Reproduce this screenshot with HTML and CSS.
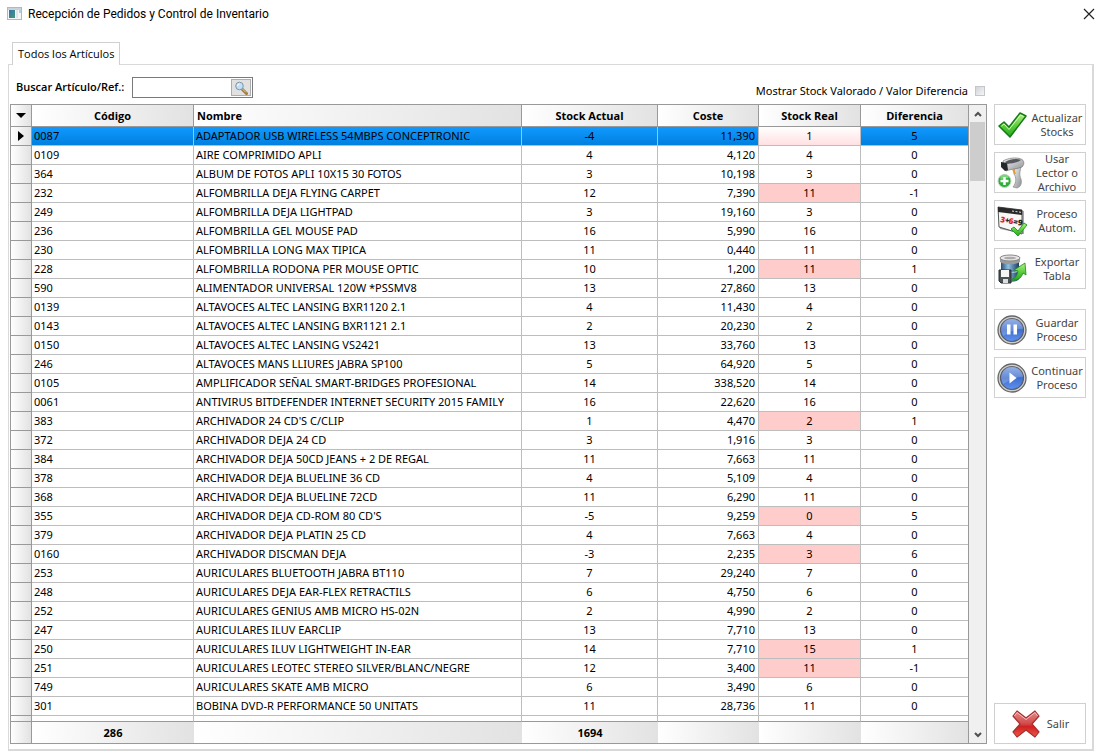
FILE: index.html
```html
<!DOCTYPE html>
<html lang="es">
<head>
<meta charset="utf-8">
<title>Recepción de Pedidos y Control de Inventario</title>
<link rel="stylesheet" href="styles.css">
</head>
<body>
<header class="titlebar">
  <svg class="app-icon" width="15" height="14" viewBox="0 0 15 14"><defs><linearGradient id="app" x1="0" y1="0" x2="1" y2="1"><stop offset="0" stop-color="#3b6fae"/><stop offset="1" stop-color="#3f9a78"/></linearGradient></defs><rect x=".5" y=".5" width="14" height="12" fill="#f4f6f8" stroke="#b4b8bd"/><rect x="1" y="1" width="13" height="2" fill="#c9d1da"/><rect x="2" y="3" width="6" height="8" fill="url(#app)"/><rect x="9" y="3" width="2" height="8" fill="#dfe6ea"/><rect x="12" y="3" width="2" height="3" fill="#b9ccd8"/></svg>
  <h1 class="title">Recepción de Pedidos y Control de Inventario</h1>
  <button class="close" type="button" aria-label="Cerrar"><svg width="12" height="12" viewBox="0 0 12 12"><path d="M1 1l10 10M11 1L1 11" stroke="#222" stroke-width="1.2"/></svg></button>
</header>
<nav class="tabs"><button class="tab" type="button">Todos los Artículos</button></nav>
<main class="panel">
  <div class="toolbar">
    <label class="search-label" for="search">Buscar Artículo/Ref.:</label>
    <div class="search">
      <input class="search-input" id="search" type="text">
      <button class="search-button" type="button" aria-label="Buscar"><svg width="14" height="14" viewBox="0 0 14 14"><path d="M8 8l4.500 4.500" stroke="#a07a3c" stroke-width="3" stroke-linecap="round"/><path d="M8 7.500l4 4" stroke="#e6cf94" stroke-width="1"/><circle cx="5.500" cy="5" r="3.800" fill="#bfe0f6" stroke="#7f95a8"/><path d="M3.500 5a2 2 0 0 1 2-2" stroke="#fff" fill="none"/></svg></button>
    </div>
    <label class="valued" for="valued">Mostrar Stock Valorado / Valor Diferencia</label>
    <input class="check" id="valued" type="checkbox">
  </div>
  <div class="content">
    <div class="grid">
      <table class="table">
        <colgroup><col class="c-mark"><col class="c-code"><col class="c-name"><col class="c-stock"><col class="c-cost"><col class="c-real"><col class="c-diff"></colgroup>
        <thead><tr><th class="mark"><svg width="10" height="5" viewBox="0 0 10 5"><path d="M0 0h10L5 5z"/></svg></th><th>Código</th><th class="left">Nombre</th><th>Stock Actual</th><th>Coste</th><th>Stock Real</th><th>Diferencia</th></tr></thead>
        <tbody>
          <tr class="selected"><td class="mark"><svg width="6" height="10" viewBox="0 0 6 10"><path d="M0 0v10l6-5z"/></svg></td><td>0087</td><td>ADAPTADOR USB WIRELESS 54MBPS CONCEPTRONIC</td><td>-4</td><td>11,390</td><td class="changed">1</td><td>5</td></tr>
          <tr><td class="mark"></td><td>0109</td><td>AIRE COMPRIMIDO APLI</td><td>4</td><td>4,120</td><td>4</td><td>0</td></tr>
          <tr><td class="mark"></td><td>364</td><td>ALBUM DE FOTOS APLI 10X15 30 FOTOS</td><td>3</td><td>10,198</td><td>3</td><td>0</td></tr>
          <tr><td class="mark"></td><td>232</td><td>ALFOMBRILLA DEJA FLYING CARPET</td><td>12</td><td>7,390</td><td class="changed">11</td><td>-1</td></tr>
          <tr><td class="mark"></td><td>249</td><td>ALFOMBRILLA DEJA LIGHTPAD</td><td>3</td><td>19,160</td><td>3</td><td>0</td></tr>
          <tr><td class="mark"></td><td>236</td><td>ALFOMBRILLA GEL MOUSE PAD</td><td>16</td><td>5,990</td><td>16</td><td>0</td></tr>
          <tr><td class="mark"></td><td>230</td><td>ALFOMBRILLA LONG MAX TIPICA</td><td>11</td><td>0,440</td><td>11</td><td>0</td></tr>
          <tr><td class="mark"></td><td>228</td><td>ALFOMBRILLA RODONA PER MOUSE OPTIC</td><td>10</td><td>1,200</td><td class="changed">11</td><td>1</td></tr>
          <tr><td class="mark"></td><td>590</td><td>ALIMENTADOR UNIVERSAL 120W *PSSMV8</td><td>13</td><td>27,860</td><td>13</td><td>0</td></tr>
          <tr><td class="mark"></td><td>0139</td><td>ALTAVOCES ALTEC LANSING BXR1120 2.1</td><td>4</td><td>11,430</td><td>4</td><td>0</td></tr>
          <tr><td class="mark"></td><td>0143</td><td>ALTAVOCES ALTEC LANSING BXR1121 2.1</td><td>2</td><td>20,230</td><td>2</td><td>0</td></tr>
          <tr><td class="mark"></td><td>0150</td><td>ALTAVOCES ALTEC LANSING VS2421</td><td>13</td><td>33,760</td><td>13</td><td>0</td></tr>
          <tr><td class="mark"></td><td>246</td><td>ALTAVOCES MANS LLIURES JABRA SP100</td><td>5</td><td>64,920</td><td>5</td><td>0</td></tr>
          <tr><td class="mark"></td><td>0105</td><td>AMPLIFICADOR SEÑAL SMART-BRIDGES PROFESIONAL</td><td>14</td><td>338,520</td><td>14</td><td>0</td></tr>
          <tr><td class="mark"></td><td>0061</td><td>ANTIVIRUS BITDEFENDER INTERNET SECURITY 2015 FAMILY</td><td>16</td><td>22,620</td><td>16</td><td>0</td></tr>
          <tr><td class="mark"></td><td>383</td><td>ARCHIVADOR 24 CD'S C/CLIP</td><td>1</td><td>4,470</td><td class="changed">2</td><td>1</td></tr>
          <tr><td class="mark"></td><td>372</td><td>ARCHIVADOR DEJA 24 CD</td><td>3</td><td>1,916</td><td>3</td><td>0</td></tr>
          <tr><td class="mark"></td><td>384</td><td>ARCHIVADOR DEJA 50CD JEANS + 2 DE REGAL</td><td>11</td><td>7,663</td><td>11</td><td>0</td></tr>
          <tr><td class="mark"></td><td>378</td><td>ARCHIVADOR DEJA BLUELINE 36 CD</td><td>4</td><td>5,109</td><td>4</td><td>0</td></tr>
          <tr><td class="mark"></td><td>368</td><td>ARCHIVADOR DEJA BLUELINE 72CD</td><td>11</td><td>6,290</td><td>11</td><td>0</td></tr>
          <tr><td class="mark"></td><td>355</td><td>ARCHIVADOR DEJA CD-ROM 80 CD'S</td><td>-5</td><td>9,259</td><td class="changed">0</td><td>5</td></tr>
          <tr><td class="mark"></td><td>379</td><td>ARCHIVADOR DEJA PLATIN 25 CD</td><td>4</td><td>7,663</td><td>4</td><td>0</td></tr>
          <tr><td class="mark"></td><td>0160</td><td>ARCHIVADOR DISCMAN DEJA</td><td>-3</td><td>2,235</td><td class="changed">3</td><td>6</td></tr>
          <tr><td class="mark"></td><td>253</td><td>AURICULARES BLUETOOTH JABRA BT110</td><td>7</td><td>29,240</td><td>7</td><td>0</td></tr>
          <tr><td class="mark"></td><td>248</td><td>AURICULARES DEJA EAR-FLEX RETRACTILS</td><td>6</td><td>4,750</td><td>6</td><td>0</td></tr>
          <tr><td class="mark"></td><td>252</td><td>AURICULARES GENIUS AMB MICRO HS-02N</td><td>2</td><td>4,990</td><td>2</td><td>0</td></tr>
          <tr><td class="mark"></td><td>247</td><td>AURICULARES ILUV EARCLIP</td><td>13</td><td>7,710</td><td>13</td><td>0</td></tr>
          <tr><td class="mark"></td><td>250</td><td>AURICULARES ILUV LIGHTWEIGHT IN-EAR</td><td>14</td><td>7,710</td><td class="changed">15</td><td>1</td></tr>
          <tr><td class="mark"></td><td>251</td><td>AURICULARES LEOTEC STEREO SILVER/BLANC/NEGRE</td><td>12</td><td>3,400</td><td class="changed">11</td><td>-1</td></tr>
          <tr><td class="mark"></td><td>749</td><td>AURICULARES SKATE AMB MICRO</td><td>6</td><td>3,490</td><td>6</td><td>0</td></tr>
          <tr><td class="mark"></td><td>301</td><td>BOBINA DVD-R PERFORMANCE 50 UNITATS</td><td>11</td><td>28,736</td><td>11</td><td>0</td></tr>
          <tr class="partial"><td class="mark"></td><td></td><td></td><td></td><td></td><td></td><td></td></tr>
        </tbody>
        <tfoot><tr><td class="mark"></td><td>286</td><td></td><td>1694</td><td></td><td></td><td></td></tr></tfoot>
      </table>
      <div class="scrollbar">
        <button class="arrow" type="button" aria-label="Subir"><svg width="8" height="6" viewBox="0 0 8 6"><path d="M1 5l3-3 3 3" fill="none" stroke="#505050" stroke-width="2"/></svg></button>
        <div class="thumb"></div>
        <button class="arrow arrow-down" type="button" aria-label="Bajar"><svg width="8" height="6" viewBox="0 0 8 6"><path d="M1 1l3 3 3-3" fill="none" stroke="#505050" stroke-width="2"/></svg></button>
      </div>
    </div>
    <aside class="actions">
      <button class="action" type="button">
        <svg width="30" height="30" viewBox="0 0 30 30"><defs><linearGradient id="green" x1="0" y1="0" x2="0" y2="1"><stop offset="0" stop-color="#b8f08c"/><stop offset=".5" stop-color="#5ed03c"/><stop offset="1" stop-color="#22a51c"/></linearGradient></defs><path d="M2 16l5-4 5 5L23 3l6 3L13 27z" fill="url(#green)" stroke="#157a18" stroke-width="1.500" stroke-linejoin="round"/><path d="M4.500 16l2.500-2 5 5.500L23.500 5l3 1.500" fill="none" stroke="#d5f8b7" stroke-width="1"/></svg>
        <span class="action-text">Actualizar Stocks</span></button>
      <button class="action" type="button">
        <svg width="30" height="34" viewBox="0 0 30 34"><defs><linearGradient id="metal" x1="0" y1="0" x2="1" y2="1"><stop offset="0" stop-color="#f5f5f5"/><stop offset="1" stop-color="#8b8f93"/></linearGradient></defs><path d="M18 10h6c-1 6-2 9 0 13 1 4 0 8-4 9l-4-1c4-5 3-10 1-13z" fill="url(#metal)" stroke="#888" stroke-width=".7"/><path d="M6 5c5-3 13-4 18-2 3 1 4 5 1 8-4 2-12 2-16 4z" fill="url(#metal)" stroke="#777" stroke-width=".7"/><path d="M4 6l6 1 1 7-3 1-4-4z" fill="#25282b"/><path d="M8 6c5-3 11-4 16-2-4 3-9 3-14 4z" fill="#55585c"/><path d="M16 13l2 5" stroke="#e59a27" stroke-width="2"/><circle cx="7.500" cy="25" r="6.500" fill="#2daf3a" stroke="#c6d4c4"/><path d="M3.500 23a4 4 0 0 1 8-1" fill="#79d878"/><path d="M7.500 21v8M3.500 25h8" stroke="#fff" stroke-width="2.500"/></svg>
        <span class="action-text">Usar Lector o Archivo</span></button>
      <button class="action" type="button">
        <svg width="30" height="32" viewBox="0 0 30 32"><path d="M2 4l25 2v23L3 24z" fill="#a6a6a6"/><path d="M1 2l24 3v24L2 22z" fill="#f7f7f7" stroke="#555"/><path d="M1 2l24 3v5L1 7z" fill="#292929"/><path d="M15 6l2 .3M18.500 6.500l2 .3M22 7l2 .3" stroke="#ddd"/><g font-family="Open Sans, sans-serif" font-weight="800" font-size="8" transform="rotate(10 3 17)"><text x="3" y="17" fill="#f01818">3</text><text x="7.500" y="17" fill="#222">+</text><text x="11.500" y="17" fill="#f01818">6</text><text x="16" y="17" fill="#222">=9</text></g><path d="M14 24l3-2 4 4 6-8 3 2-9 11z" fill="url(#green)" stroke="#2c9a2b"/></svg>
        <span class="action-text">Proceso Autom.</span></button>
      <button class="action action-last" type="button">
        <svg width="30" height="32" viewBox="0 0 30 32"><defs><linearGradient id="db"><stop offset="0" stop-color="#294e70"/><stop offset=".4" stop-color="#8fc0e2"/><stop offset="1" stop-color="#193a5d"/></linearGradient></defs><path d="M4 5v21c3 4 15 4 18 0V5z" fill="url(#db)"/><path d="M4 18c5 2 13 2 18 0" fill="none" stroke="#b9d5e8"/><path d="M3 5v4c4 3 16 3 20 0V5z" fill="#9b9b9b"/><ellipse cx="13" cy="5" rx="10" ry="3" fill="#e7e7e7" stroke="#888"/><ellipse cx="13" cy="5" rx="6" ry="1.300" fill="#aaa"/><path d="M2 17h12v13H4l-2-2z" fill="#4c5156" stroke="#292d30"/><path d="M4 17h8v7H4z" fill="#f5f5f5"/><path d="M6 26h5v4H6z" fill="#ddd"/><path d="M14 26c4 0 6-3 7-8l-4-1 11-7 1 12-3-2c-2 6-6 8-12 7z" fill="url(#green)" stroke="#218425" stroke-width=".8"/></svg>
        <span class="action-text">Exportar Tabla</span></button>
      <button class="action" type="button">
        <svg width="30" height="30" viewBox="0 0 30 30"><defs><linearGradient id="blue" x1="0" y1="0" x2="0" y2="1"><stop offset="0" stop-color="#7c9fe0"/><stop offset=".5" stop-color="#3f6fce"/><stop offset="1" stop-color="#5f91f2"/></linearGradient></defs><circle cx="15" cy="15" r="14" fill="#d0d0ce" stroke="#666" stroke-width="1.300"/><circle cx="15" cy="15" r="11.500" fill="url(#blue)" stroke="#555a66" stroke-width="1.200"/><path d="M4 15a11 11 0 0 1 22-1C19 13 11 18 6 21z" fill="#fff" opacity=".2"/><path d="M10 9.500h3.500v10H10zM16.500 9.500H20v10h-3.500z" fill="#fff"/></svg>
        <span class="action-text">Guardar Proceso</span></button>
      <button class="action" type="button">
        <svg width="30" height="30" viewBox="0 0 30 30"><circle cx="15" cy="15" r="14" fill="#d0d0ce" stroke="#666" stroke-width="1.300"/><circle cx="15" cy="15" r="11.500" fill="url(#blue)" stroke="#555a66" stroke-width="1.200"/><path d="M4 15a11 11 0 0 1 22-1C19 13 11 18 6 21z" fill="#fff" opacity=".2"/><path d="M12.500 9.500l7 5.500-7 5.500z" fill="#fff"/></svg>
        <span class="action-text">Continuar Proceso</span></button>
      <button class="action exit" type="button">
        <svg width="30" height="30" viewBox="0 0 30 30"><defs><linearGradient id="red" x1="0" y1="0" x2="0" y2="1"><stop offset="0" stop-color="#e98a8a"/><stop offset=".5" stop-color="#cf4a4a"/><stop offset=".6" stop-color="#d2201f"/><stop offset="1" stop-color="#ef5a4a"/></linearGradient></defs><path d="M6 2l9 7 9-7 4 5-7 8 7 8-4 5-9-7-9 7-4-5 7-8-7-8z" fill="url(#red)" stroke="#a33030" stroke-width="1.200" stroke-linejoin="round"/><path d="M3.500 7L6 3.500l9 7 9-7L26.500 7" fill="none" stroke="#f6bcbc"/></svg>
        <span class="exit-text">Salir</span></button>
    </aside>
  </div>
</main>
</body>
</html>
```
FILE: styles.css
```css
* { box-sizing: border-box; }
body { margin: 0; background: #fff; color: #000; font: 11px/14px "Noto Sans", "Open Sans", sans-serif; }
button, input { font: inherit; color: inherit; margin: 0; padding: 0; border-radius: 0; }
button { background: none; border: 0; }
svg { display: block; flex: none; }

.titlebar { display: flex; align-items: center; gap: 6px; height: 28px; padding: 0 6px 0 7px; }
.title { flex: 1; margin: 0; font: 400 12px/16px Roboto, "Open Sans", sans-serif; }
.close { padding: 1px; }

.tabs { display: flex; margin: 14px 12px -1px; position: relative; z-index: 1; }
.tab { height: 23px; padding: 0 5px; border: 1px solid #d0d0d0; border-bottom: 0; background: #fff; font-family: "Open Sans", sans-serif; }

.panel { margin: 0 8px; padding: 12px 6px 5px 1px; border: 1px solid #d9d9d9; border-right-width: 2px; border-bottom-width: 2px; }
.toolbar { display: flex; align-items: flex-start; height: 27px; padding-left: 6px; }
.search-label { margin-right: 8px; line-height: 20px; font-weight: 600; font-family: "Open Sans", sans-serif; }
.search { display: flex; width: 121px; height: 21px; border: 1px solid #7a7a7a; padding: 1px; }
.search-input { flex: 1; min-width: 0; border: 0; outline: 0; }
.search-button { display: grid; place-items: center; width: 20px; border: 1px solid #adadad; background: #e1e1e1; }
.valued { margin-left: auto; margin-right: 7px; line-height: 28px; }
.check { appearance: none; width: 10px; height: 10px; margin: 9px 101px 0 0; border: 1px solid #c4c6ca; background: linear-gradient(135deg, #d0d3d8, #f6f6f6); }

.content { display: flex; gap: 7px; }
.grid { flex: 1; display: flex; border: 1px solid #999; min-width: 0; }
.table { flex: 1; table-layout: fixed; border-collapse: separate; border-spacing: 0; min-width: 0; }
.c-mark { width: 21px; }
.c-code { width: 162px; }
.c-stock { width: 136px; }
.c-cost { width: 101px; }
.c-real { width: 102px; }
.c-diff { width: 107px; }
th, td { padding: 0 2px; border-right: 1px solid #bdbdbd; border-bottom: 1px solid #bdbdbd; white-space: nowrap; overflow: hidden; text-align: center; }
th { height: 22px; padding: 0 3px; border-color: #999; background: linear-gradient(90deg, #fff, #e2e2e2); font-weight: 700; font-family: "Open Sans", sans-serif; }
.left { text-align: left; }
tbody td { height: 19px; }
td:nth-child(2), td:nth-child(3) { text-align: left; }
td:nth-child(5) { padding-right: 3px; text-align: right; }
th:last-child, td:last-child { border-right: 0; }
.mark { padding: 0; border-color: #999; background: linear-gradient(90deg, #fff, #e2e2e2); }
.mark svg { margin: auto; }
.changed { background: #ffcccc; }
.selected td:not(.mark) { background: linear-gradient(#1199ff, #0080e0); }
.selected td.changed { background: linear-gradient(#fff, #ffe0e2); }
.partial td { height: 6px; line-height: 0; border-bottom-color: #999; }
tfoot td, tfoot td:nth-child(2) { height: 21px; border-bottom: 0; border-right: 0; background: linear-gradient(90deg, #fff, #e2e2e2); font-weight: 700; text-align: center; }
tfoot td.mark { border-right: 1px solid #999; }

.scrollbar { display: flex; flex-direction: column; width: 18px; padding: 0 1px; border-left: 1px solid #999; background: #f0f0f0; }
.arrow { display: grid; place-items: center; height: 17px; }
.arrow-down { margin-top: auto; }
.thumb { height: 59px; background: #cdcdcd; }

.actions { display: flex; flex-direction: column; gap: 7px; width: 92px; }
.action { display: flex; align-items: center; height: 41px; padding: 0 2px; border: 1px solid #d0d0d0; background: #fff; color: #444; }
.action-text { flex: 1; margin: 0 -3px 0 1px; }
.action-last { margin-bottom: 13px; }
.exit { margin-top: auto; justify-content: center; gap: 6px; }
```
